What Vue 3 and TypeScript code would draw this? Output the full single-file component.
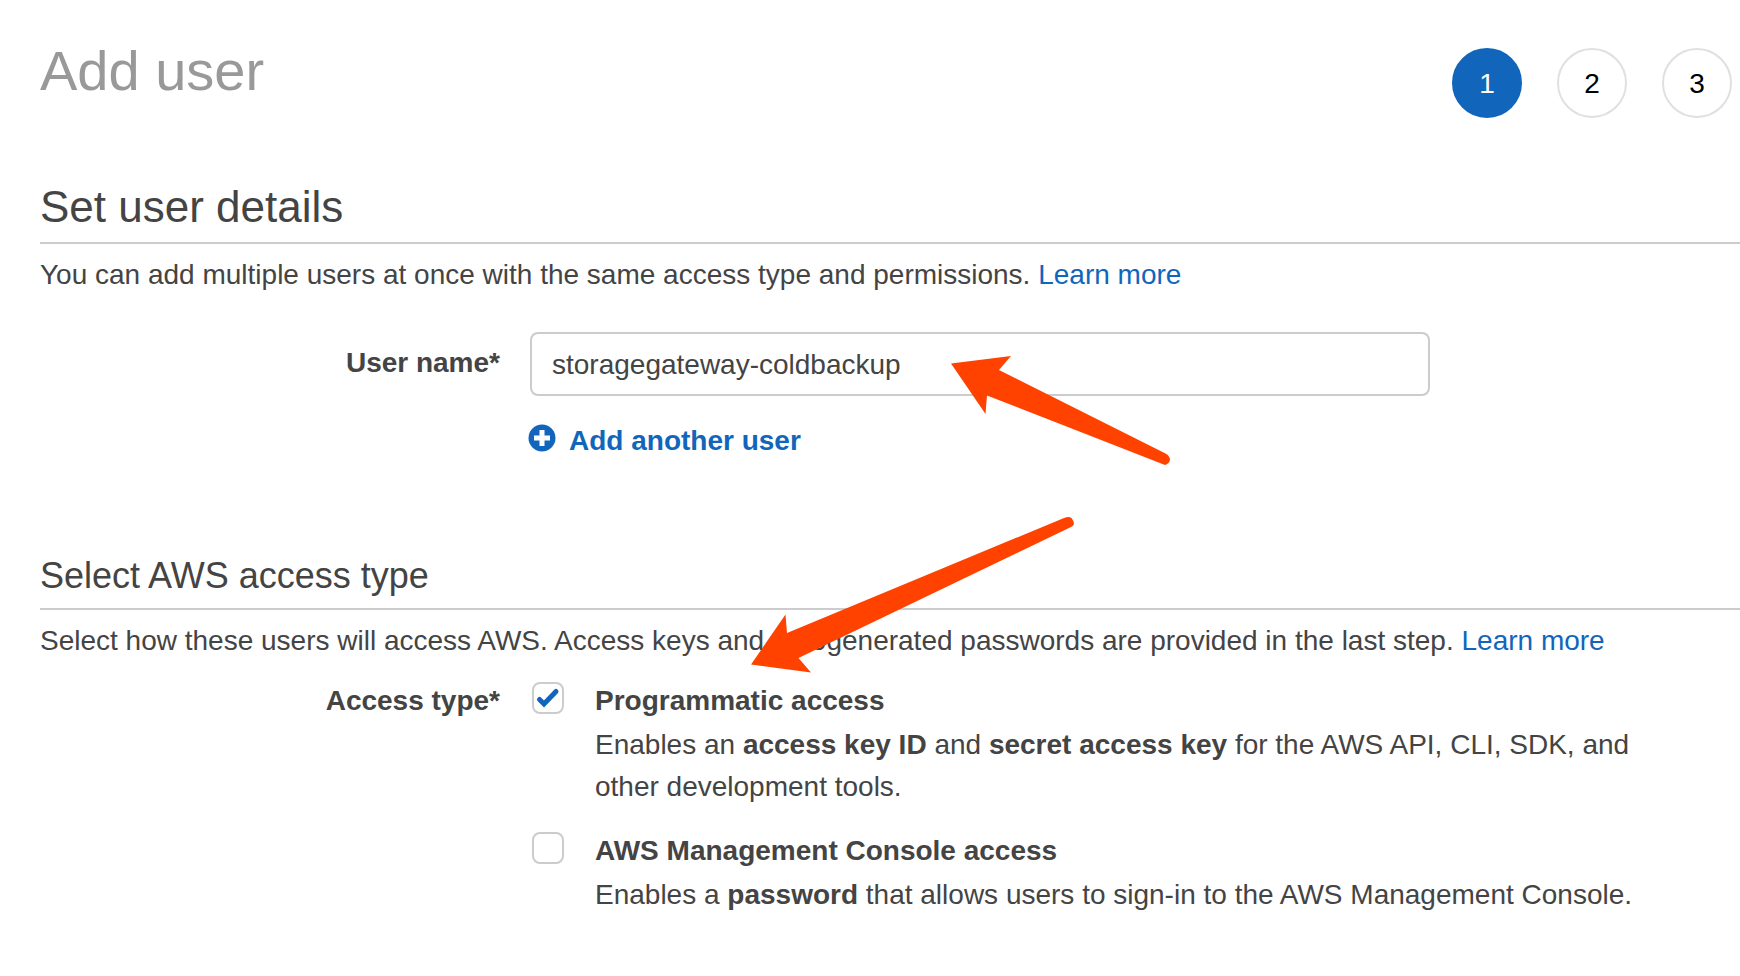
<script setup lang="ts">
import { ref } from 'vue'

interface Step {
  number: number
  current: boolean
}

const steps: Step[] = [
  { number: 1, current: true },
  { number: 2, current: false },
  { number: 3, current: false },
]

const userName = ref('storagegateway-coldbackup')
const programmatic = ref(true)
const managementConsole = ref(false)
</script>

<template>
  <main class="page">
    <header class="header">
      <h1 class="title">Add user</h1>
      <ol class="steps">
        <li v-for="step in steps" :key="step.number" class="step" :class="{ current: step.current }">
          {{ step.number }}
        </li>
      </ol>
    </header>

    <section class="details">
      <h2 class="heading large">Set user details</h2>
      <p class="intro">
        You can add multiple users at once with the same access type and permissions.
        <a class="link" href="#">Learn more</a>
      </p>
      <div class="form-row name-row">
        <label class="label name-label" for="user-name">User name*</label>
        <div class="field">
          <input id="user-name" v-model="userName" class="text-box" type="text" spellcheck="false" />
          <button class="add-button" type="button">
            <svg class="plus" viewBox="0 0 28 28" aria-hidden="true">
              <circle cx="14" cy="14" r="13.5" fill="#1166bb" />
              <path d="M14 6v16M6 14h16" stroke="#fff" stroke-width="5" />
            </svg>
            <span>Add another user</span>
          </button>
        </div>
      </div>
    </section>

    <section class="access">
      <h2 class="heading">Select AWS access type</h2>
      <p class="intro">
        Select how these users will access AWS. Access keys and autogenerated passwords are provided in the last step.
        <a class="link" href="#">Learn more</a>
      </p>
      <div class="form-row" role="group" aria-labelledby="access-label">
        <span id="access-label" class="label">Access type*</span>
        <div class="options">
          <div class="option">
            <span class="tick">
              <input id="programmatic" v-model="programmatic" class="box" type="checkbox" />
              <svg v-if="programmatic" class="mark" viewBox="0 0 32 32" aria-hidden="true">
                <path
                  d="M7.500 17.500L12 22L24 9.500"
                  fill="none"
                  stroke="#1166bb"
                  stroke-width="5"
                  stroke-linecap="round"
                />
              </svg>
            </span>
            <div class="option-text">
              <label class="option-label" for="programmatic">Programmatic access</label>
              <p class="description">
                Enables an <b>access key ID</b> and <b>secret access key</b> for the AWS API, CLI, SDK, and other
                development tools.
              </p>
            </div>
          </div>
          <div class="option">
            <span class="tick">
              <input id="console" v-model="managementConsole" class="box" type="checkbox" />
            </span>
            <div class="option-text">
              <label class="option-label" for="console">AWS Management Console access</label>
              <p class="description">
                Enables a <b>password</b> that allows users to sign-in to the AWS Management Console.
              </p>
            </div>
          </div>
        </div>
      </div>
    </section>

    <svg class="arrows" width="1740" height="976" viewBox="0 0 1740 976" aria-hidden="true">
      <path
        d="M951 363.500L1011 356L999 370L1165.500 453.500Q1170 456 1170 460Q1169 464 1165 465L987 395.500L985.500 414Z"
      />
      <path
        d="M751 664.500L785.500 614.500L787 633L1064 518Q1069 516 1071.500 518Q1074 521 1074 524Q1073.500 526 1070 527.500L798.500 658L811 672.500Z"
      />
    </svg>
  </main>
</template>

<style>
body {
  margin: 0;
  background: #fff;
}
</style>

<style scoped>
.page {
  position: relative;
  min-height: 100vh;
  box-sizing: border-box;
  padding: 37px 0 48px 40px;
  overflow: hidden;
  color: #444;
  font: 28px/42px "Helvetica Neue", "Liberation Sans", Arial, sans-serif;
}

.header {
  display: flex;
  justify-content: space-between;
  align-items: flex-start;
  padding-right: 8px;
}

.title {
  margin: 0;
  color: #999;
  font-size: 56px;
  font-weight: 400;
  line-height: 68px;
}

.steps {
  display: flex;
  gap: 35px;
  margin: 11px 0 0;
  padding: 0;
  list-style: none;
}

.step {
  box-sizing: border-box;
  width: 70px;
  height: 70px;
  border: 2px solid #e0e0e0;
  border-radius: 50%;
  color: #000;
  line-height: 68px;
  text-align: center;
}

.step.current {
  border-color: #1166bb;
  background: #1166bb;
  color: #fff;
}

.details {
  margin-top: 61px;
}

.access {
  margin-top: 90px;
}

.heading {
  margin: 0;
  padding-bottom: 8px;
  border-bottom: 2px solid #ccc;
  font-size: 36px;
  font-weight: 400;
  line-height: 48px;
}

.heading.large {
  padding-bottom: 7px;
  font-size: 44px;
  line-height: 56px;
}

.intro {
  margin: 10px 0 0;
}

.link {
  color: #1166bb;
  text-decoration: none;
}

.form-row {
  display: grid;
  grid-template-columns: 460px minmax(0, 1fr);
  column-gap: 30px;
  margin-top: 18px;
}

.name-row {
  margin-top: 36px;
}

.label {
  font-weight: 700;
  text-align: right;
}

.name-label {
  padding-top: 10px;
}

.field {
  max-width: 900px;
}

.text-box {
  display: block;
  box-sizing: border-box;
  width: 100%;
  height: 64px;
  padding: 2px 20px 0;
  border: 2px solid #ccc;
  border-radius: 8px;
  background: #fff;
  color: #444;
  font: inherit;
}

.add-button {
  display: flex;
  align-items: center;
  gap: 13px;
  margin: 24px 0 0 -2px;
  padding: 0;
  border: 0;
  background: none;
  color: #1166bb;
  font: inherit;
  font-weight: 700;
}

.plus {
  width: 28px;
  height: 28px;
  margin-bottom: 6px;
}

.options {
  display: grid;
  gap: 22px;
  padding-left: 2px;
}

.option {
  display: flex;
  gap: 31px;
}

.tick {
  position: relative;
  flex: none;
  width: 32px;
  height: 32px;
  margin-top: 2px;
}

.box {
  display: block;
  appearance: none;
  box-sizing: border-box;
  width: 32px;
  height: 32px;
  margin: 0;
  border: 2px solid #ccc;
  border-radius: 8px;
  background: #fff;
}

.mark {
  position: absolute;
  inset: 0;
  pointer-events: none;
}

.option-text {
  max-width: 1050px;
}

.option-label {
  display: block;
  font-weight: 700;
}

.description {
  margin: 2px 0 0;
}

.arrows {
  position: absolute;
  top: 0;
  left: 0;
  fill: #ff4200;
  pointer-events: none;
}
</style>
